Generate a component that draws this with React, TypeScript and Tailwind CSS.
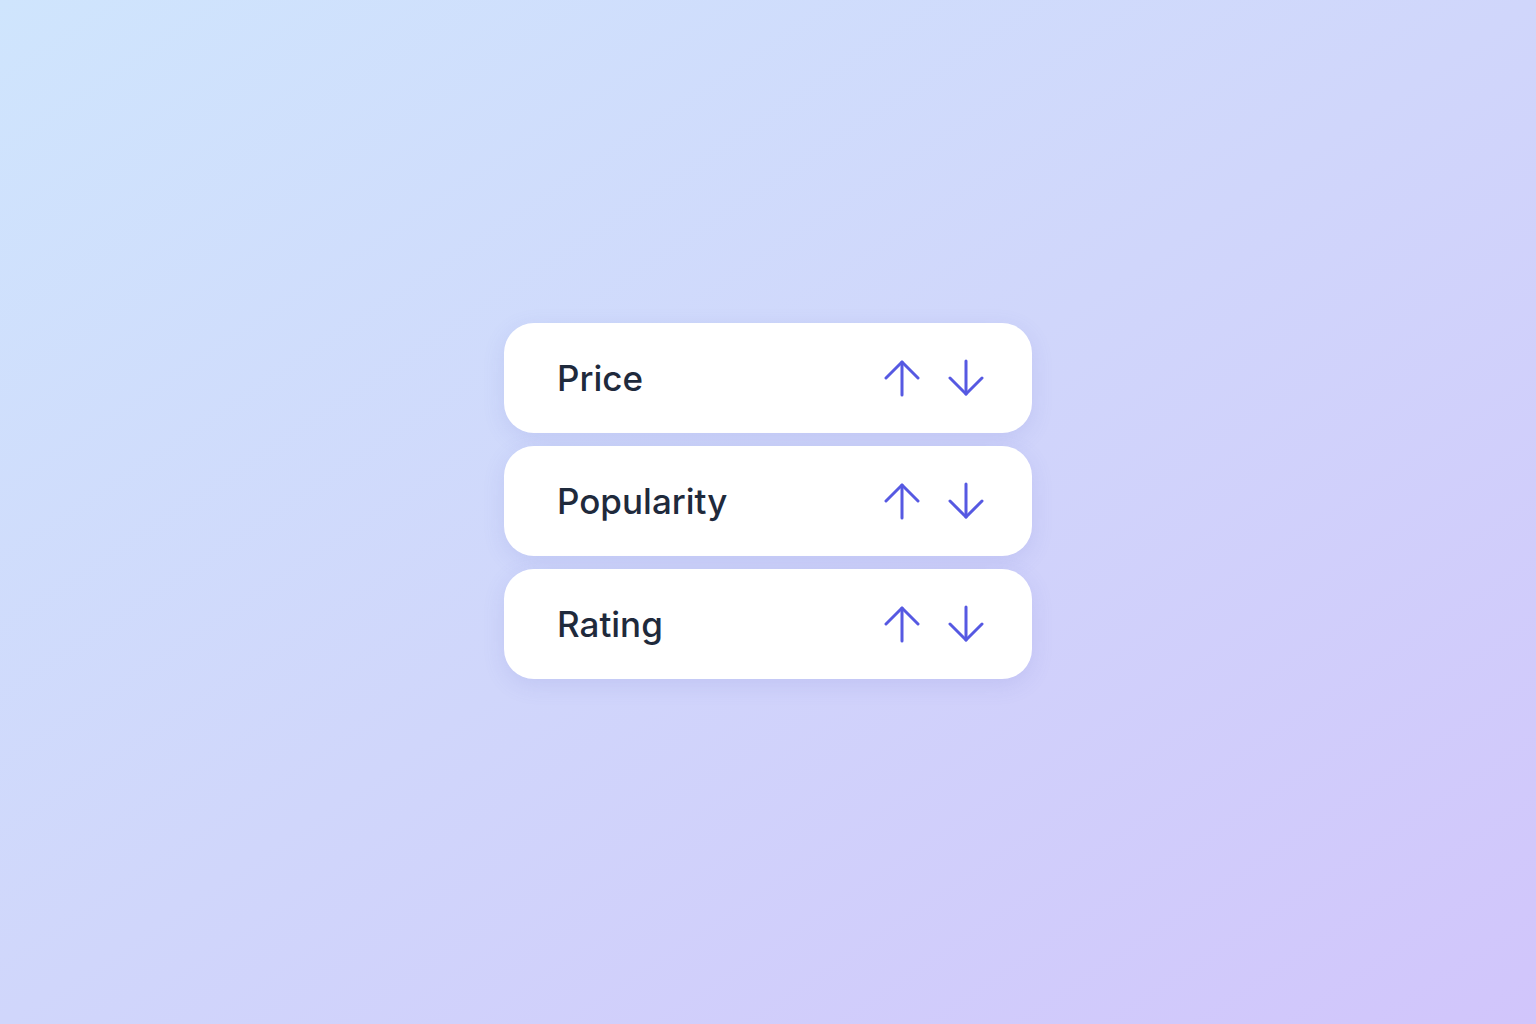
const SORT_FIELDS = ["Price", "Popularity", "Rating"] as const;

function Arrow({ direction }: { direction: "up" | "down" }) {
  return (
    <svg
      width={36}
      height={40}
      viewBox="0 0 36 40"
      fill="none"
      stroke="currentColor"
      strokeWidth={3}
      strokeLinecap="round"
      strokeLinejoin="round"
      className={direction === "down" ? "rotate-180" : undefined}
    >
      <path d="M18 37V4" />
      <path d="M2 20 18 4l16 16" />
    </svg>
  );
}

function SortRow({ label }: { label: string }) {
  return (
    <div className="flex h-[110px] w-[528px] items-center justify-between rounded-[30px] bg-white pl-[53px] pr-[48px] shadow-[0_6px_22px_rgba(96,104,200,0.14)]">
      <span className="text-[35px] font-medium text-[#1f2a3c]">{label}</span>
      <div className="flex items-center gap-[28px] text-[#5659e2]">
        <button type="button" aria-label={`Sort ${label} ascending`}>
          <Arrow direction="up" />
        </button>
        <button type="button" aria-label={`Sort ${label} descending`}>
          <Arrow direction="down" />
        </button>
      </div>
    </div>
  );
}

export default function App() {
  return (
    <div
      className="flex min-h-screen items-center justify-center bg-gradient-to-br from-[#cfe5fd] via-[#d0d6fb] to-[#d1c5fb]"
      style={{ fontFamily: "Inter, 'Noto Sans', sans-serif" }}
    >
      <div className="mb-[22px] flex flex-col gap-[13px]">
        {SORT_FIELDS.map((field) => (
          <SortRow key={field} label={field} />
        ))}
      </div>
    </div>
  );
}
